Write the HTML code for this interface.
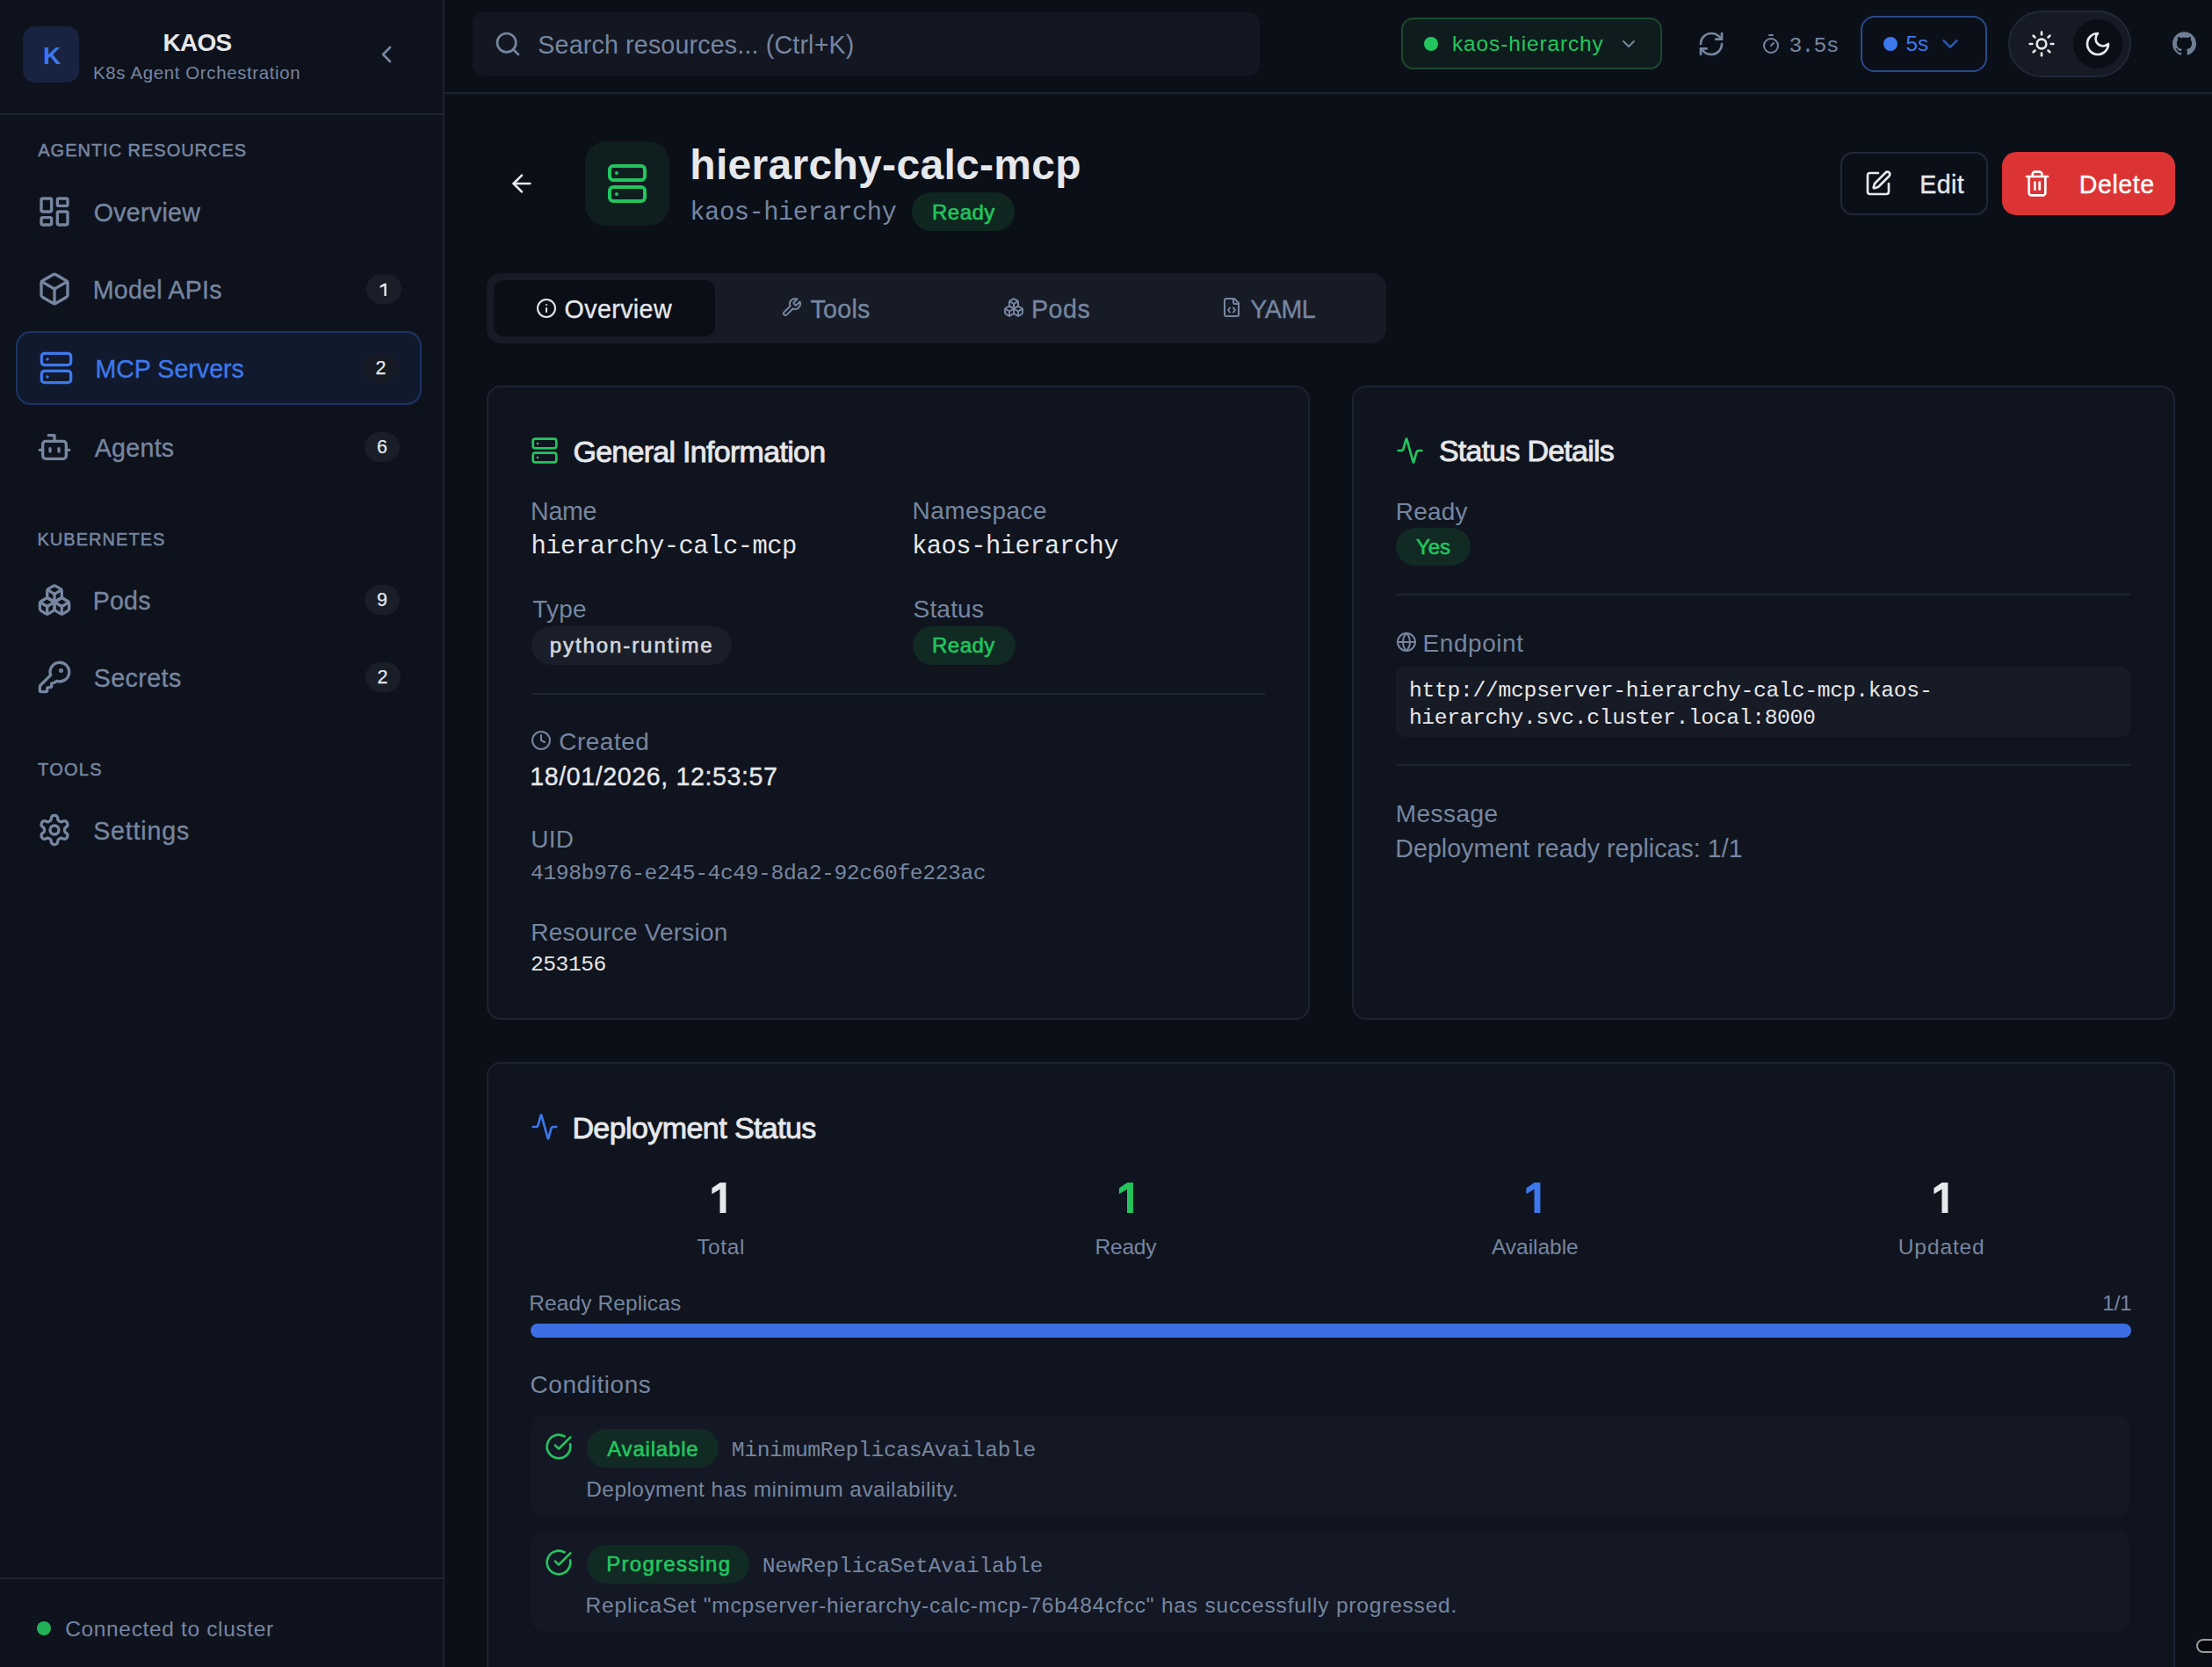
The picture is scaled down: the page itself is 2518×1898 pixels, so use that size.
<!DOCTYPE html>
<html><head><meta charset="utf-8"><title>KAOS</title>
<style>
html,body{margin:0;padding:0;width:2518px;height:1898px;overflow:hidden;background:#0b0f18;}
.b{position:absolute;box-sizing:border-box;}
.t{position:absolute;white-space:nowrap;}
.i{position:absolute;overflow:visible;}
</style></head><body>
<div class="b" style="left:0px;top:0px;width:504px;height:1898px;background:#0e121c;"></div>
<div class="b" style="left:504px;top:0px;width:2px;height:1898px;background:#1d2232;"></div>
<div class="b" style="left:0px;top:129px;width:504px;height:2px;background:#1d2232;"></div>
<div class="b" style="left:0px;top:1796px;width:504px;height:2px;background:#1d2232;"></div>
<div class="b" style="left:18px;top:1822px;width:462px;height:64px;background:#0f131e;border-radius:16px;"></div>
<div class="b" style="left:42px;top:1846px;width:16px;height:16px;background:#22b356;border-radius:8px;"></div>
<div class="b" style="left:506px;top:0px;width:2012px;height:105px;background:#0b1018;"></div>
<div class="b" style="left:506px;top:105px;width:2012px;height:2px;background:#1d2232;"></div>
<div class="b" style="left:26px;top:30px;width:64px;height:64px;background:#172341;border-radius:14px;"></div>
<div class="b" style="left:18px;top:377px;width:462px;height:84px;background:#111a2d;border-radius:17px;border:2px solid #1c3566;"></div>
<div class="b" style="left:417px;top:312px;width:40px;height:34px;background:#1a1e29;border-radius:17px;"></div>
<div class="b" style="left:413.5px;top:402.4px;width:40.0px;height:34.0px;background:#161a24;border-radius:17px;"></div>
<div class="b" style="left:415px;top:492px;width:40px;height:34px;background:#1a1e29;border-radius:17px;"></div>
<div class="b" style="left:415px;top:666px;width:40px;height:34px;background:#1a1e29;border-radius:17px;"></div>
<div class="b" style="left:415.5px;top:754px;width:40.0px;height:34px;background:#1a1e29;border-radius:17px;"></div>
<div class="b" style="left:538px;top:14px;width:896px;height:72px;background:#131722;border-radius:12px;"></div>
<div class="b" style="left:1595px;top:20px;width:297px;height:59px;background:#0f1c1d;border-radius:14px;border:2px solid #1a4a2c;"></div>
<div class="b" style="left:1621px;top:42px;width:16px;height:16px;background:#22c55e;border-radius:8px;"></div>
<div class="b" style="left:2118px;top:18px;width:144px;height:64px;background:#0b0f18;border-radius:16px;border:2px solid #274a8c;"></div>
<div class="b" style="left:2144px;top:42px;width:16px;height:16px;background:#3d78ec;border-radius:8px;"></div>
<div class="b" style="left:2286px;top:12px;width:140px;height:76px;background:#161a25;border-radius:38px;border:2px solid #222838;"></div>
<div class="b" style="left:2360px;top:22px;width:56px;height:56px;background:#0b0e16;border-radius:28px;"></div>
<div class="b" style="left:666px;top:161px;width:96px;height:96px;background:#0f1f1f;border-radius:24px;"></div>
<div class="b" style="left:1038px;top:219px;width:117px;height:44px;background:#0f2720;border-radius:22px;"></div>
<div class="b" style="left:2095px;top:173px;width:168px;height:72px;background:#0b0f18;border-radius:14px;border:2px solid #222839;"></div>
<div class="b" style="left:2279px;top:173px;width:197px;height:72px;background:#dc3434;border-radius:16px;"></div>
<div class="b" style="left:554px;top:311px;width:1024px;height:80px;background:#171b26;border-radius:16px;"></div>
<div class="b" style="left:562px;top:319px;width:252px;height:64px;background:#0b0e16;border-radius:12px;"></div>
<div class="b" style="left:554px;top:439px;width:937px;height:722px;background:#10141e;border-radius:16px;border:2px solid #1e2334;"></div>
<div class="b" style="left:1539px;top:439px;width:937px;height:722px;background:#10141e;border-radius:16px;border:2px solid #1e2334;"></div>
<div class="b" style="left:554px;top:1209px;width:1922px;height:751px;background:#10141e;border-radius:16px;border:2px solid #1e2334;"></div>
<div class="b" style="left:605px;top:713px;width:228px;height:44px;background:#1a1e29;border-radius:22px;"></div>
<div class="b" style="left:1039px;top:713px;width:117px;height:44px;background:#112a24;border-radius:22px;"></div>
<div class="b" style="left:605px;top:789px;width:836px;height:2px;background:#1e2334;"></div>
<div class="b" style="left:1589px;top:601px;width:85px;height:43px;background:#112a24;border-radius:22px;"></div>
<div class="b" style="left:1590px;top:676px;width:835px;height:2px;background:#1e2334;"></div>
<div class="b" style="left:1589px;top:759px;width:836px;height:80px;background:#171b26;border-radius:10px;"></div>
<div class="b" style="left:1590px;top:870px;width:835px;height:2px;background:#1e2334;"></div>
<div class="b" style="left:604px;top:1507px;width:1822px;height:16px;background:#3b6fe3;border-radius:8px;"></div>
<div class="b" style="left:604px;top:1611px;width:1821px;height:116px;background:#141824;border-radius:16px;"></div>
<div class="b" style="left:604px;top:1743px;width:1821px;height:115px;background:#141824;border-radius:16px;"></div>
<div class="b" style="left:668px;top:1627px;width:150px;height:44px;background:#112a24;border-radius:22px;"></div>
<div class="b" style="left:668px;top:1759px;width:185px;height:44px;background:#112a24;border-radius:22px;"></div>
<div class="b" style="left:2500px;top:1866px;width:60px;height:16px;background:#05070b;border-radius:8px;border:2px solid #9c9c9c;"></div>
<svg class="i" style="left:42.0px;top:221.3px;color:#7686a0" width="40" height="40" viewBox="0 0 24 24" fill="none" stroke="currentColor" stroke-width="2" stroke-linecap="round" stroke-linejoin="round"><rect width="7" height="9" x="3" y="3" rx="1"/><rect width="7" height="5" x="14" y="3" rx="1"/><rect width="7" height="9" x="14" y="12" rx="1"/><rect width="7" height="5" x="3" y="16" rx="1"/></svg>
<svg class="i" style="left:42.0px;top:309.3px;color:#7686a0" width="40" height="40" viewBox="0 0 24 24" fill="none" stroke="currentColor" stroke-width="2" stroke-linecap="round" stroke-linejoin="round"><path d="M21 8a2 2 0 0 0-1-1.73l-7-4a2 2 0 0 0-2 0l-7 4A2 2 0 0 0 3 8v8a2 2 0 0 0 1 1.73l7 4a2 2 0 0 0 2 0l7-4A2 2 0 0 0 21 16Z"/><path d="m3.3 7 8.7 5 8.7-5"/><path d="M12 22V12"/></svg>
<svg class="i" style="left:43.9px;top:399.1px;color:#3d78ec" width="40" height="40" viewBox="0 0 24 24" fill="none" stroke="currentColor" stroke-width="2" stroke-linecap="round" stroke-linejoin="round"><rect width="20" height="8" x="2" y="2" rx="2" ry="2"/><rect width="20" height="8" x="2" y="14" rx="2" ry="2"/><line x1="6" x2="6.01" y1="6" y2="6"/><line x1="6" x2="6.01" y1="18" y2="18"/></svg>
<svg class="i" style="left:42.0px;top:489.0px;color:#7686a0" width="40" height="40" viewBox="0 0 24 24" fill="none" stroke="currentColor" stroke-width="2" stroke-linecap="round" stroke-linejoin="round"><path d="M12 8V4H8"/><rect width="16" height="12" x="4" y="8" rx="2"/><path d="M2 14h2"/><path d="M20 14h2"/><path d="M15 13v2"/><path d="M9 13v2"/></svg>
<svg class="i" style="left:42.0px;top:663.0px;color:#7686a0" width="40" height="40" viewBox="0 0 24 24" fill="none" stroke="currentColor" stroke-width="2" stroke-linecap="round" stroke-linejoin="round"><path d="M2.97 12.92A2 2 0 0 0 2 14.63v3.24a2 2 0 0 0 .97 1.71l3 1.8a2 2 0 0 0 2.06 0L12 19v-5.5l-5-3-4.03 2.42Z"/><path d="m7 16.5-4.74-2.85"/><path d="m7 16.5 5-3"/><path d="M7 16.5v5.17"/><path d="M12 13.5V19l3.970 2.38a2 2 0 0 0 2.06 0l3-1.8a2 2 0 0 0 .97-1.71v-3.24a2 2 0 0 0-.97-1.71L17 10.5l-5 3Z"/><path d="m17 16.5-5-3"/><path d="m17 16.5 4.74-2.85"/><path d="M17 16.5v5.17"/><path d="M7.97 4.42A2 2 0 0 0 7 6.13v4.37l5 3 5-3V6.13a2 2 0 0 0-.97-1.71l-3-1.8a2 2 0 0 0-2.06 0l-3 1.8Z"/><path d="M12 8 7.26 5.15"/><path d="m12 8 4.74-2.85"/><path d="M12 13.5V8"/></svg>
<svg class="i" style="left:42.0px;top:751.0px;color:#7686a0" width="40" height="40" viewBox="0 0 24 24" fill="none" stroke="currentColor" stroke-width="2" stroke-linecap="round" stroke-linejoin="round"><path d="M2.586 17.414A2 2 0 0 0 2 18.828V21a1 1 0 0 0 1 1h3a1 1 0 0 0 1-1v-1a1 1 0 0 1 1-1h1a1 1 0 0 0 1-1v-1a1 1 0 0 1 1-1h.172a2 2 0 0 0 1.414-.586l.814-.814a6.5 6.5 0 1 0-4-4z"/><circle cx="16.5" cy="7.5" r=".5" fill="currentColor"/></svg>
<svg class="i" style="left:42.0px;top:924.8px;color:#7686a0" width="40" height="40" viewBox="0 0 24 24" fill="none" stroke="currentColor" stroke-width="2" stroke-linecap="round" stroke-linejoin="round"><path d="M12.22 2h-.44a2 2 0 0 0-2 2v.18a2 2 0 0 1-1 1.73l-.43.25a2 2 0 0 1-2 0l-.15-.08a2 2 0 0 0-2.73.73l-.22.38a2 2 0 0 0 .73 2.730l.15.1a2 2 0 0 1 1 1.72v.51a2 2 0 0 1-1 1.74l-.15.09a2 2 0 0 0-.73 2.73l.22.38a2 2 0 0 0 2.73.73l.15-.08a2 2 0 0 1 2 0l.43.25a2 2 0 0 1 1 1.73V20a2 2 0 0 0 2 2h.44a2 2 0 0 0 2-2v-.18a2 2 0 0 1 1-1.73l.43-.25a2 2 0 0 1 2 0l.15.08a2 2 0 0 0 2.73-.73l.22-.39a2 2 0 0 0-.73-2.73l-.15-.08a2 2 0 0 1-1-1.74v-.5a2 2 0 0 1 1-1.74l.15-.09a2 2 0 0 0 .73-2.73l-.22-.38a2 2 0 0 0-2.73-.73l-.15.08a2 2 0 0 1-2 0l-.43-.25a2 2 0 0 1-1-1.73V4a2 2 0 0 0-2-2z"/><circle cx="12" cy="12" r="3"/></svg>
<svg class="i" style="left:424.0px;top:46.0px;color:#7686a0" width="32" height="32" viewBox="0 0 24 24" fill="none" stroke="currentColor" stroke-width="2" stroke-linecap="round" stroke-linejoin="round"><path d="m15 18-6-6 6-6"/></svg>
<svg class="i" style="left:562.0px;top:34.0px;color:#7686a0" width="32" height="32" viewBox="0 0 24 24" fill="none" stroke="currentColor" stroke-width="2" stroke-linecap="round" stroke-linejoin="round"><circle cx="11" cy="11" r="8"/><path d="m21 21-4.3-4.3"/></svg>
<svg class="i" style="left:1842.0px;top:38.0px;color:#7686a0" width="24" height="24" viewBox="0 0 24 24" fill="none" stroke="currentColor" stroke-width="2" stroke-linecap="round" stroke-linejoin="round"><path d="m6 9 6 6 6-6"/></svg>
<svg class="i" style="left:1932.0px;top:34.0px;color:#7686a0" width="32" height="32" viewBox="0 0 24 24" fill="none" stroke="currentColor" stroke-width="2" stroke-linecap="round" stroke-linejoin="round"><path d="M3 12a9 9 0 0 1 9-9 9.75 9.75 0 0 1 6.74 2.74L21 8"/><path d="M21 3v5h-5"/><path d="M21 12a9 9 0 0 1-9 9 9.75 9.75 0 0 1-6.74-2.74L3 16"/><path d="M8 16H3v5"/></svg>
<svg class="i" style="left:2004.0px;top:37.7px;color:#7686a0" width="24" height="24" viewBox="0 0 24 24" fill="none" stroke="currentColor" stroke-width="2" stroke-linecap="round" stroke-linejoin="round"><line x1="10" x2="14" y1="2" y2="2"/><line x1="12" x2="15" y1="14" y2="11"/><circle cx="12" cy="14" r="8"/></svg>
<svg class="i" style="left:2205.0px;top:35.0px;color:#2a55aa" width="30" height="30" viewBox="0 0 24 24" fill="none" stroke="currentColor" stroke-width="2" stroke-linecap="round" stroke-linejoin="round"><path d="m6 9 6 6 6-6"/></svg>
<svg class="i" style="left:2308.0px;top:34.0px;color:#e6e8eb" width="32" height="32" viewBox="0 0 24 24" fill="none" stroke="currentColor" stroke-width="2" stroke-linecap="round" stroke-linejoin="round"><circle cx="12" cy="12" r="4"/><path d="M12 2v2"/><path d="M12 20v2"/><path d="m4.93 4.93 1.41 1.41"/><path d="m17.66 17.66 1.41 1.41"/><path d="M2 12h2"/><path d="M20 12h2"/><path d="m6.34 17.66-1.41 1.41"/><path d="m19.07 4.93-1.41 1.41"/></svg>
<svg class="i" style="left:2372.0px;top:34.0px;color:#e6e8eb" width="32" height="32" viewBox="0 0 24 24" fill="none" stroke="currentColor" stroke-width="2" stroke-linecap="round" stroke-linejoin="round"><path d="M12 3a6 6 0 0 0 9 9 9 9 0 1 1-9-9Z"/></svg>
<svg class="i" style="left:2472.5px;top:36.1px;color:#6f7f96" width="27" height="27" viewBox="0 0 24 24" fill="currentColor" stroke="currentColor" stroke-width="0" stroke-linecap="round" stroke-linejoin="round"><path d="M12 .297c-6.63 0-12 5.373-12 12 0 5.303 3.438 9.8 8.205 11.385.6.113.82-.258.82-.577 0-.285-.01-1.04-.015-2.04-3.338.724-4.042-1.61-4.042-1.61C4.422 18.07 3.633 17.7 3.633 17.7c-1.087-.744.084-.729.084-.729 1.205.084 1.838 1.236 1.838 1.236 1.07 1.835 2.809 1.305 3.495.998.108-.776.417-1.305.76-1.605-2.665-.3-5.466-1.332-5.466-5.93 0-1.310.465-2.38 1.235-3.220-.135-.303-.54-1.523.105-3.176 0 0 1.005-.322 3.3 1.23.96-.267 1.98-.399 3-.405 1.02.006 2.04.138 3 .405 2.28-1.552 3.285-1.23 3.285-1.23.645 1.653.24 2.873.12 3.176.765.84 1.23 1.910 1.23 3.220 0 4.610-2.805 5.625-5.475 5.920.42.36.81 1.096.81 2.220 0 1.606-.015 2.896-.015 3.286 0 .315.21.69.825.57C20.565 22.092 24 17.592 24 12.297c0-6.627-5.373-12-12-12"/></svg>
<svg class="i" style="left:577.7px;top:192.8px;color:#e6e8eb" width="32" height="32" viewBox="0 0 24 24" fill="none" stroke="currentColor" stroke-width="2" stroke-linecap="round" stroke-linejoin="round"><path d="m12 19-7-7 7-7"/><path d="M19 12H5"/></svg>
<svg class="i" style="left:690.0px;top:185.0px;color:#22c55e" width="48" height="48" viewBox="0 0 24 24" fill="none" stroke="currentColor" stroke-width="2" stroke-linecap="round" stroke-linejoin="round"><rect width="20" height="8" x="2" y="2" rx="2" ry="2"/><rect width="20" height="8" x="2" y="14" rx="2" ry="2"/><line x1="6" x2="6.01" y1="6" y2="6"/><line x1="6" x2="6.01" y1="18" y2="18"/></svg>
<svg class="i" style="left:2121.5px;top:192.5px;color:#e6e8eb" width="32" height="32" viewBox="0 0 24 24" fill="none" stroke="currentColor" stroke-width="2" stroke-linecap="round" stroke-linejoin="round"><path d="M12 3H5a2 2 0 0 0-2 2v14a2 2 0 0 0 2 2h14a2 2 0 0 0 2-2v-7"/><path d="M18.375 2.625a1 1 0 0 1 3 3l-9.013 9.014a2 2 0 0 1-.853.505l-2.873.84a.5.5 0 0 1-.62-.62l.84-2.873a2 2 0 0 1 .506-.852z"/></svg>
<svg class="i" style="left:2303.0px;top:193.0px;color:#ffffff" width="32" height="32" viewBox="0 0 24 24" fill="none" stroke="currentColor" stroke-width="2" stroke-linecap="round" stroke-linejoin="round"><path d="M3 6h18"/><path d="M19 6v14c0 1-1 2-2 2H7c-1 0-2-1-2-2V6"/><path d="M8 6V4c0-1 1-2 2-2h4c1 0 2 1 2 2v2"/><line x1="10" x2="10" y1="11" y2="17"/><line x1="14" x2="14" y1="11" y2="17"/></svg>
<svg class="i" style="left:610.0px;top:339.2px;color:#e6e8eb" width="24" height="24" viewBox="0 0 24 24" fill="none" stroke="currentColor" stroke-width="2" stroke-linecap="round" stroke-linejoin="round"><circle cx="12" cy="12" r="10"/><path d="M12 16v-4"/><path d="M12 8h.01"/></svg>
<svg class="i" style="left:889.4px;top:338.3px;color:#7686a0" width="24" height="24" viewBox="0 0 24 24" fill="none" stroke="currentColor" stroke-width="2" stroke-linecap="round" stroke-linejoin="round"><path d="M14.7 6.3a1 1 0 0 0 0 1.4l1.6 1.6a1 1 0 0 0 1.4 0l3.77-3.77a6 6 0 0 1-7.94 7.94l-6.910 6.910a2.12 2.12 0 0 1-3-3l6.910-6.910a6 6 0 0 1 7.94-7.94l-3.76 3.76z"/></svg>
<svg class="i" style="left:1142.3px;top:338.3px;color:#7686a0" width="24" height="24" viewBox="0 0 24 24" fill="none" stroke="currentColor" stroke-width="2" stroke-linecap="round" stroke-linejoin="round"><path d="M2.97 12.92A2 2 0 0 0 2 14.63v3.24a2 2 0 0 0 .97 1.71l3 1.8a2 2 0 0 0 2.06 0L12 19v-5.5l-5-3-4.03 2.42Z"/><path d="m7 16.5-4.74-2.85"/><path d="m7 16.5 5-3"/><path d="M7 16.5v5.17"/><path d="M12 13.5V19l3.970 2.38a2 2 0 0 0 2.06 0l3-1.8a2 2 0 0 0 .97-1.71v-3.24a2 2 0 0 0-.97-1.71L17 10.5l-5 3Z"/><path d="m17 16.5-5-3"/><path d="m17 16.5 4.74-2.85"/><path d="M17 16.5v5.17"/><path d="M7.97 4.42A2 2 0 0 0 7 6.13v4.37l5 3 5-3V6.13a2 2 0 0 0-.97-1.71l-3-1.8a2 2 0 0 0-2.06 0l-3 1.8Z"/><path d="M12 8 7.26 5.15"/><path d="m12 8 4.74-2.85"/><path d="M12 13.5V8"/></svg>
<svg class="i" style="left:1390.0px;top:338.3px;color:#7686a0" width="24" height="24" viewBox="0 0 24 24" fill="none" stroke="currentColor" stroke-width="2" stroke-linecap="round" stroke-linejoin="round"><path d="M10 12.5 8 15l2 2.5"/><path d="m14 12.5 2 2.5-2 2.5"/><path d="M14 2v4a2 2 0 0 0 2 2h4"/><path d="M15 2H6a2 2 0 0 0-2 2v16a2 2 0 0 0 2 2h12a2 2 0 0 0 2-2V7z"/></svg>
<svg class="i" style="left:603.6px;top:496.6px;color:#22c55e" width="32" height="32" viewBox="0 0 24 24" fill="none" stroke="currentColor" stroke-width="2" stroke-linecap="round" stroke-linejoin="round"><rect width="20" height="8" x="2" y="2" rx="2" ry="2"/><rect width="20" height="8" x="2" y="14" rx="2" ry="2"/><line x1="6" x2="6.01" y1="6" y2="6"/><line x1="6" x2="6.01" y1="18" y2="18"/></svg>
<svg class="i" style="left:604.2px;top:831.0px;color:#7686a0" width="24" height="24" viewBox="0 0 24 24" fill="none" stroke="currentColor" stroke-width="2" stroke-linecap="round" stroke-linejoin="round"><circle cx="12" cy="12" r="10"/><polyline points="12 6 12 12 16 14"/></svg>
<svg class="i" style="left:1588.8px;top:496.6px;color:#22c55e" width="32" height="32" viewBox="0 0 24 24" fill="none" stroke="currentColor" stroke-width="2" stroke-linecap="round" stroke-linejoin="round"><path d="M22 12h-2.48a2 2 0 0 0-1.93 1.46l-2.35 8.36a.25.25 0 0 1-.48 0L9.24 2.18a.25.25 0 0 0-.48 0l-2.35 8.36A2 2 0 0 1 4.49 12H2"/></svg>
<svg class="i" style="left:1589.0px;top:719.0px;color:#7686a0" width="24" height="24" viewBox="0 0 24 24" fill="none" stroke="currentColor" stroke-width="2" stroke-linecap="round" stroke-linejoin="round"><circle cx="12" cy="12" r="10"/><path d="M12 2a14.5 14.5 0 0 0 0 20 14.5 14.5 0 0 0 0-20"/><path d="M2 12h20"/></svg>
<svg class="i" style="left:604.1px;top:1267.0px;color:#3d78ec" width="32" height="32" viewBox="0 0 24 24" fill="none" stroke="currentColor" stroke-width="2" stroke-linecap="round" stroke-linejoin="round"><path d="M22 12h-2.48a2 2 0 0 0-1.93 1.46l-2.35 8.36a.25.25 0 0 1-.48 0L9.24 2.18a.25.25 0 0 0-.48 0l-2.35 8.36A2 2 0 0 1 4.49 12H2"/></svg>
<svg class="i" style="left:620.0px;top:1631.0px;color:#22c55e" width="32" height="32" viewBox="0 0 24 24" fill="none" stroke="currentColor" stroke-width="2" stroke-linecap="round" stroke-linejoin="round"><path d="M21.801 10A10 10 0 1 1 17 3.335"/><path d="m9 11 3 3L22 4"/></svg>
<svg class="i" style="left:620.0px;top:1763.0px;color:#22c55e" width="32" height="32" viewBox="0 0 24 24" fill="none" stroke="currentColor" stroke-width="2" stroke-linecap="round" stroke-linejoin="round"><path d="M21.801 10A10 10 0 1 1 17 3.335"/><path d="m9 11 3 3L22 4"/></svg>
<svg class="i" style="left:0;top:0" width="2518" height="1898"><polygon fill="#e6e8eb" points="819.5,1346.5 826.4,1346.5 826.4,1381.1 819.5,1381.1 819.5,1354.1 810.4,1359.4 810.4,1352.8"/></svg>
<svg class="i" style="left:0;top:0" width="2518" height="1898"><polygon fill="#22c55e" points="1283.0,1346.5 1289.9,1346.5 1289.9,1381.1 1283.0,1381.1 1283.0,1354.1 1273.9,1359.4 1273.9,1352.8"/></svg>
<svg class="i" style="left:0;top:0" width="2518" height="1898"><polygon fill="#3d78ec" points="1746.5,1346.5 1753.4,1346.5 1753.4,1381.1 1746.5,1381.1 1746.5,1354.1 1737.4,1359.4 1737.4,1352.8"/></svg>
<svg class="i" style="left:0;top:0" width="2518" height="1898"><polygon fill="#e6e8eb" points="2210.5,1346.5 2217.4,1346.5 2217.4,1381.1 2210.5,1381.1 2210.5,1354.1 2201.4,1359.4 2201.4,1352.8"/></svg>
<svg class="i" style="left:0;top:0" width="600" height="400"><polygon fill="#e6e8eb" points="437.3,322.7 439.8,322.7 439.8,337.0 437.4,337.0 437.4,325.8 432.6,327.7 432.6,325.5"/></svg>
<div class="t" style="left:427.5px;top:409.2px;font-size:21.4px;line-height:21.4px;font-weight:400;font-family:'Liberation Sans';color:#e6e8eb;letter-spacing:0.00px;-webkit-text-stroke:0.25px #e6e8eb">2</div>
<div class="t" style="left:429.0px;top:498.8px;font-size:21.4px;line-height:21.4px;font-weight:400;font-family:'Liberation Sans';color:#e6e8eb;letter-spacing:0.00px;-webkit-text-stroke:0.25px #e6e8eb">6</div>
<div class="t" style="left:429.0px;top:672.8px;font-size:21.4px;line-height:21.4px;font-weight:400;font-family:'Liberation Sans';color:#e6e8eb;letter-spacing:0.00px;-webkit-text-stroke:0.25px #e6e8eb">9</div>
<div class="t" style="left:429.5px;top:760.8px;font-size:21.4px;line-height:21.4px;font-weight:400;font-family:'Liberation Sans';color:#e6e8eb;letter-spacing:0.00px;-webkit-text-stroke:0.25px #e6e8eb">2</div>
<div class="t" style="left:49.1px;top:49.5px;font-size:28.0px;line-height:28.0px;font-weight:700;font-family:'Liberation Sans';color:#3d78ec;letter-spacing:0.00px">K</div>
<div class="t" style="left:185.6px;top:34.8px;font-size:28.0px;line-height:28.0px;font-weight:700;font-family:'Liberation Sans';color:#e6e8eb;letter-spacing:-0.74px">KAOS</div>
<div class="t" style="left:106.1px;top:72.7px;font-size:20.4px;line-height:20.4px;font-weight:400;font-family:'Liberation Sans';color:#7686a0;letter-spacing:0.66px">K8s Agent Orchestration</div>
<div class="t" style="left:43.3px;top:161.3px;font-size:20.0px;line-height:20.0px;font-weight:400;font-family:'Liberation Sans';color:#7686a0;letter-spacing:0.98px;-webkit-text-stroke:0.52px #7686a0">AGENTIC RESOURCES</div>
<div class="t" style="left:106.7px;top:227.9px;font-size:28.6px;line-height:28.6px;font-weight:400;font-family:'Liberation Sans';color:#7686a0;letter-spacing:0.29px;-webkit-text-stroke:0.34px #7686a0">Overview</div>
<div class="t" style="left:105.7px;top:316.1px;font-size:28.6px;line-height:28.6px;font-weight:400;font-family:'Liberation Sans';color:#7686a0;letter-spacing:0.24px;-webkit-text-stroke:0.34px #7686a0">Model APIs</div>
<div class="t" style="left:108.4px;top:406.2px;font-size:28.6px;line-height:28.6px;font-weight:400;font-family:'Liberation Sans';color:#3d78ec;letter-spacing:0.00px;-webkit-text-stroke:0.34px #3d78ec">MCP Servers</div>
<div class="t" style="left:107.7px;top:495.6px;font-size:28.6px;line-height:28.6px;font-weight:400;font-family:'Liberation Sans';color:#7686a0;letter-spacing:0.29px;-webkit-text-stroke:0.34px #7686a0">Agents</div>
<div class="t" style="left:42.5px;top:603.7px;font-size:20.0px;line-height:20.0px;font-weight:400;font-family:'Liberation Sans';color:#7686a0;letter-spacing:1.03px;-webkit-text-stroke:0.52px #7686a0">KUBERNETES</div>
<div class="t" style="left:105.7px;top:669.5px;font-size:28.6px;line-height:28.6px;font-weight:400;font-family:'Liberation Sans';color:#7686a0;letter-spacing:0.22px;-webkit-text-stroke:0.34px #7686a0">Pods</div>
<div class="t" style="left:106.7px;top:757.8px;font-size:28.6px;line-height:28.6px;font-weight:400;font-family:'Liberation Sans';color:#7686a0;letter-spacing:0.44px;-webkit-text-stroke:0.34px #7686a0">Secrets</div>
<div class="t" style="left:43.0px;top:865.5px;font-size:20.0px;line-height:20.0px;font-weight:400;font-family:'Liberation Sans';color:#7686a0;letter-spacing:1.27px;-webkit-text-stroke:0.52px #7686a0">TOOLS</div>
<div class="t" style="left:106.2px;top:932.4px;font-size:28.6px;line-height:28.6px;font-weight:400;font-family:'Liberation Sans';color:#7686a0;letter-spacing:0.83px;-webkit-text-stroke:0.34px #7686a0">Settings</div>
<div class="t" style="left:74.2px;top:1842.5px;font-size:24.5px;line-height:24.5px;font-weight:400;font-family:'Liberation Sans';color:#7686a0;letter-spacing:0.65px">Connected to cluster</div>
<div class="t" style="left:612.3px;top:37.2px;font-size:28.6px;line-height:28.6px;font-weight:400;font-family:'Liberation Sans';color:#7686a0;letter-spacing:0.18px">Search resources... (Ctrl+K)</div>
<div class="t" style="left:1653.0px;top:38.3px;font-size:24.5px;line-height:24.5px;font-weight:400;font-family:'Liberation Sans';color:#22c55e;letter-spacing:0.85px">kaos-hierarchy</div>
<div class="t" style="left:2036.5px;top:40.0px;font-size:24.7px;line-height:24.7px;font-weight:400;font-family:'Liberation Mono';color:#7686a0;letter-spacing:-0.77px">3.5s</div>
<div class="t" style="left:2169.5px;top:38.2px;font-size:24.5px;line-height:24.5px;font-weight:400;font-family:'Liberation Sans';color:#3d78ec;letter-spacing:-0.11px">5s</div>
<div class="t" style="left:785.3px;top:164.1px;font-size:48.0px;line-height:48.0px;font-weight:700;font-family:'Liberation Sans';color:#e6e8eb;letter-spacing:0.30px">hierarchy-calc-mcp</div>
<div class="t" style="left:785.3px;top:228.8px;font-size:28.8px;line-height:28.8px;font-weight:400;font-family:'Liberation Mono';color:#7686a0;letter-spacing:-0.49px">kaos-hierarchy</div>
<div class="t" style="left:1061.1px;top:229.5px;font-size:24.0px;line-height:24.0px;font-weight:400;font-family:'Liberation Sans';color:#22c55e;letter-spacing:0.43px;-webkit-text-stroke:0.62px #22c55e">Ready</div>
<div class="t" style="left:2185.2px;top:195.6px;font-size:28.6px;line-height:28.6px;font-weight:400;font-family:'Liberation Sans';color:#e6e8eb;letter-spacing:0.40px;-webkit-text-stroke:0.34px #e6e8eb">Edit</div>
<div class="t" style="left:2366.7px;top:195.6px;font-size:28.6px;line-height:28.6px;font-weight:400;font-family:'Liberation Sans';color:#ffffff;letter-spacing:0.58px;-webkit-text-stroke:0.34px #ffffff">Delete</div>
<div class="t" style="left:642.6px;top:337.8px;font-size:28.6px;line-height:28.6px;font-weight:400;font-family:'Liberation Sans';color:#e6e8eb;letter-spacing:0.40px;-webkit-text-stroke:0.34px #e6e8eb">Overview</div>
<div class="t" style="left:922.4px;top:337.8px;font-size:28.6px;line-height:28.6px;font-weight:400;font-family:'Liberation Sans';color:#7686a0;letter-spacing:0.32px;-webkit-text-stroke:0.34px #7686a0">Tools</div>
<div class="t" style="left:1174.0px;top:337.8px;font-size:28.6px;line-height:28.6px;font-weight:400;font-family:'Liberation Sans';color:#7686a0;letter-spacing:0.52px;-webkit-text-stroke:0.34px #7686a0">Pods</div>
<div class="t" style="left:1423.2px;top:337.8px;font-size:28.6px;line-height:28.6px;font-weight:400;font-family:'Liberation Sans';color:#7686a0;letter-spacing:-0.39px;-webkit-text-stroke:0.34px #7686a0">YAML</div>
<div class="t" style="left:652.4px;top:496.6px;font-size:34.0px;line-height:34.0px;font-weight:400;font-family:'Liberation Sans';color:#e6e8eb;letter-spacing:-0.71px;-webkit-text-stroke:0.88px #e6e8eb">General Information</div>
<div class="t" style="left:604.0px;top:567.6px;font-size:28.6px;line-height:28.6px;font-weight:400;font-family:'Liberation Sans';color:#7686a0;letter-spacing:-0.26px">Name</div>
<div class="t" style="left:604.5px;top:609.1px;font-size:28.8px;line-height:28.8px;font-weight:400;font-family:'Liberation Mono';color:#e6e8eb;letter-spacing:-0.48px">hierarchy-calc-mcp</div>
<div class="t" style="left:1038.5px;top:568.1px;font-size:28.0px;line-height:28.0px;font-weight:400;font-family:'Liberation Sans';color:#7686a0;letter-spacing:0.45px">Namespace</div>
<div class="t" style="left:1038.0px;top:609.1px;font-size:28.8px;line-height:28.8px;font-weight:400;font-family:'Liberation Mono';color:#e6e8eb;letter-spacing:-0.49px">kaos-hierarchy</div>
<div class="t" style="left:606.3px;top:680.3px;font-size:28.0px;line-height:28.0px;font-weight:400;font-family:'Liberation Sans';color:#7686a0;letter-spacing:0.20px">Type</div>
<div class="t" style="left:1039.5px;top:680.3px;font-size:28.0px;line-height:28.0px;font-weight:400;font-family:'Liberation Sans';color:#7686a0;letter-spacing:0.20px">Status</div>
<div class="t" style="left:625.8px;top:723.2px;font-size:24.0px;line-height:24.0px;font-weight:400;font-family:'Liberation Sans';color:#d4d7dd;letter-spacing:1.91px;-webkit-text-stroke:0.62px #d4d7dd">python-runtime</div>
<div class="t" style="left:1061.1px;top:723.2px;font-size:24.0px;line-height:24.0px;font-weight:400;font-family:'Liberation Sans';color:#22c55e;letter-spacing:0.43px;-webkit-text-stroke:0.62px #22c55e">Ready</div>
<div class="t" style="left:636.2px;top:830.7px;font-size:28.0px;line-height:28.0px;font-weight:400;font-family:'Liberation Sans';color:#7686a0;letter-spacing:0.50px">Created</div>
<div class="t" style="left:603.2px;top:870.2px;font-size:28.6px;line-height:28.6px;font-weight:400;font-family:'Liberation Sans';color:#e6e8eb;letter-spacing:0.60px;-webkit-text-stroke:0.34px #e6e8eb">18/01/2026, 12:53:57</div>
<div class="t" style="left:604.3px;top:942.3px;font-size:28.0px;line-height:28.0px;font-weight:400;font-family:'Liberation Sans';color:#7686a0;letter-spacing:0.20px">UID</div>
<div class="t" style="left:604.0px;top:982.4px;font-size:24.7px;line-height:24.7px;font-weight:400;font-family:'Liberation Mono';color:#7686a0;letter-spacing:-0.42px">4198b976-e245-4c49-8da2-92c60fe223ac</div>
<div class="t" style="left:604.3px;top:1047.7px;font-size:28.0px;line-height:28.0px;font-weight:400;font-family:'Liberation Sans';color:#7686a0;letter-spacing:0.20px">Resource Version</div>
<div class="t" style="left:604.0px;top:1086.0px;font-size:24.7px;line-height:24.7px;font-weight:400;font-family:'Liberation Mono';color:#e6e8eb;letter-spacing:-0.51px">253156</div>
<div class="t" style="left:1637.9px;top:496.3px;font-size:34.0px;line-height:34.0px;font-weight:400;font-family:'Liberation Sans';color:#e6e8eb;letter-spacing:-0.76px;-webkit-text-stroke:0.88px #e6e8eb">Status Details</div>
<div class="t" style="left:1588.8px;top:569.3px;font-size:28.0px;line-height:28.0px;font-weight:400;font-family:'Liberation Sans';color:#7686a0;letter-spacing:0.20px">Ready</div>
<div class="t" style="left:1611.9px;top:610.7px;font-size:24.0px;line-height:24.0px;font-weight:400;font-family:'Liberation Sans';color:#22c55e;letter-spacing:0.00px;-webkit-text-stroke:0.62px #22c55e">Yes</div>
<div class="t" style="left:1619.6px;top:718.9px;font-size:28.0px;line-height:28.0px;font-weight:400;font-family:'Liberation Sans';color:#7686a0;letter-spacing:0.55px">Endpoint</div>
<div class="t" style="left:1603.9px;top:773.8px;font-size:24.7px;line-height:24.7px;font-weight:400;font-family:'Liberation Mono';color:#e6e8eb;letter-spacing:-0.29px">http://mcpserver-hierarchy-calc-mcp.kaos-</div>
<div class="t" style="left:1603.9px;top:805.0px;font-size:24.7px;line-height:24.7px;font-weight:400;font-family:'Liberation Mono';color:#e6e8eb;letter-spacing:-0.36px">hierarchy.svc.cluster.local:8000</div>
<div class="t" style="left:1588.8px;top:913.3px;font-size:28.0px;line-height:28.0px;font-weight:400;font-family:'Liberation Sans';color:#7686a0;letter-spacing:0.45px">Message</div>
<div class="t" style="left:1588.3px;top:951.6px;font-size:28.6px;line-height:28.6px;font-weight:400;font-family:'Liberation Sans';color:#7686a0;letter-spacing:0.04px">Deployment ready replicas: 1/1</div>
<div class="t" style="left:651.4px;top:1267.0px;font-size:34.0px;line-height:34.0px;font-weight:400;font-family:'Liberation Sans';color:#e6e8eb;letter-spacing:-0.58px;-webkit-text-stroke:0.88px #e6e8eb">Deployment Status</div>
<div class="t" style="left:793.2px;top:1407.8px;font-size:24.5px;line-height:24.5px;font-weight:400;font-family:'Liberation Sans';color:#7686a0;letter-spacing:0.64px">Total</div>
<div class="t" style="left:1246.5px;top:1407.8px;font-size:24.5px;line-height:24.5px;font-weight:400;font-family:'Liberation Sans';color:#7686a0;letter-spacing:-0.20px">Ready</div>
<div class="t" style="left:1698.0px;top:1407.8px;font-size:24.5px;line-height:24.5px;font-weight:400;font-family:'Liberation Sans';color:#7686a0;letter-spacing:-0.03px">Available</div>
<div class="t" style="left:2160.8px;top:1407.8px;font-size:24.5px;line-height:24.5px;font-weight:400;font-family:'Liberation Sans';color:#7686a0;letter-spacing:0.88px">Updated</div>
<div class="t" style="left:602.2px;top:1472.3px;font-size:24.5px;line-height:24.5px;font-weight:400;font-family:'Liberation Sans';color:#7686a0;letter-spacing:0.11px">Ready Replicas</div>
<div class="t" style="left:2393.3px;top:1472.3px;font-size:24.0px;line-height:24.0px;font-weight:400;font-family:'Liberation Sans';color:#7686a0;letter-spacing:0.00px">1/1</div>
<div class="t" style="left:603.6px;top:1563.1px;font-size:28.0px;line-height:28.0px;font-weight:400;font-family:'Liberation Sans';color:#7686a0;letter-spacing:0.55px">Conditions</div>
<div class="t" style="left:691.2px;top:1637.5px;font-size:24.0px;line-height:24.0px;font-weight:400;font-family:'Liberation Sans';color:#22c55e;letter-spacing:0.82px;-webkit-text-stroke:0.62px #22c55e">Available</div>
<div class="t" style="left:832.8px;top:1638.9px;font-size:24.7px;line-height:24.7px;font-weight:400;font-family:'Liberation Mono';color:#7686a0;letter-spacing:-0.39px">MinimumReplicasAvailable</div>
<div class="t" style="left:667.2px;top:1683.7px;font-size:24.5px;line-height:24.5px;font-weight:400;font-family:'Liberation Sans';color:#7686a0;letter-spacing:0.44px">Deployment has minimum availability.</div>
<div class="t" style="left:690.2px;top:1769.2px;font-size:24.0px;line-height:24.0px;font-weight:400;font-family:'Liberation Sans';color:#22c55e;letter-spacing:1.28px;-webkit-text-stroke:0.62px #22c55e">Progressing</div>
<div class="t" style="left:867.8px;top:1770.6px;font-size:24.7px;line-height:24.7px;font-weight:400;font-family:'Liberation Mono';color:#7686a0;letter-spacing:-0.30px">NewReplicaSetAvailable</div>
<div class="t" style="left:666.6px;top:1815.7px;font-size:24.5px;line-height:24.5px;font-weight:400;font-family:'Liberation Sans';color:#7686a0;letter-spacing:0.81px">ReplicaSet "mcpserver-hierarchy-calc-mcp-76b484cfcc" has successfully progressed.</div>
</body></html>
